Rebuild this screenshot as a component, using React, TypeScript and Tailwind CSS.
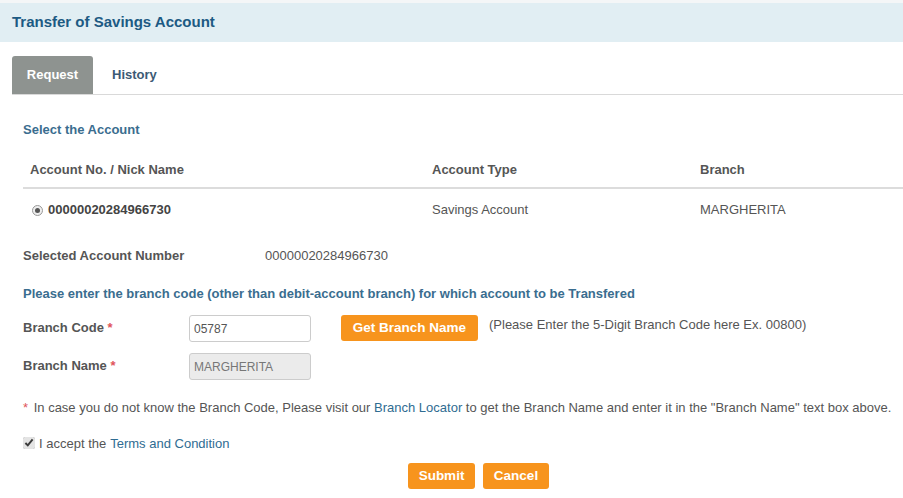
import { useState } from "react";

const font = "font-[family-name:'Liberation_Sans',Arial,sans-serif]";

function OrangeButton({ label, className }: { label: string; className?: string }) {
  return (
    <button
      type="button"
      className={`h-[26px] rounded-[3px] bg-[#f7941d] text-[13.5px] font-bold text-white ${className ?? ""}`}
    >
      {label}
    </button>
  );
}

export default function App() {
  const [accepted, setAccepted] = useState(true);
  const [branchCode, setBranchCode] = useState("05787");

  return (
    <div className={`${font} h-[498px] w-[903px] overflow-hidden bg-white text-[13px] text-[#555]`}>
      <div className="h-[3px] bg-[#f4f6f7]" />
      <div className="flex h-[39px] items-center bg-[#e1eef3] pl-3">
        <h1 className="text-[15px] font-bold text-[#1c5a83]">Transfer of Savings Account</h1>
      </div>

      <div className="mt-[14px] ml-3 flex h-[39px] items-stretch border-b border-[#d9d9d9]">
        <div className="flex w-[81px] items-center justify-center rounded-t-[3px] bg-[#8e9390] font-bold text-white">
          Request
        </div>
        <div className="flex items-center pl-[19px] font-bold text-[#3c5a75]">History</div>
      </div>

      <div className="pl-[23px]">
        <p className="mt-[25px] h-[16px] font-bold text-[#3a6d8f]">Select the Account</p>

        <div className="mt-[24px] flex h-[29px] items-start border-b-2 border-[#dcdcdc] font-bold text-[#555]">
          <span className="w-[409px] pl-[7px]">Account No. / Nick Name</span>
          <span className="w-[268px]">Account Type</span>
          <span>Branch</span>
        </div>

        <div className="flex h-[42px] items-center">
          <span className="flex w-[409px] items-center pl-[9px]">
            <span className="mr-[5px] flex h-[11px] w-[11px] items-center justify-center rounded-full border border-[#999] bg-[#eee]">
              <span className="h-[5px] w-[5px] rounded-full bg-[#555]" />
            </span>
            <span className="font-bold text-[#444]">00000020284966730</span>
          </span>
          <span className="w-[268px]">Savings Account</span>
          <span>MARGHERITA</span>
        </div>

        <div className="mt-[15px] flex">
          <span className="w-[242px] font-bold">Selected Account Number</span>
          <span>00000020284966730</span>
        </div>

        <p className="mt-[18px] font-bold text-[#3a6d8f]">
          Please enter the branch code (other than debit-account branch) for which account to be Transfered
        </p>

        <div className="mt-[12px] flex items-start">
          <span className="w-[166px] pt-[3px] font-bold">
            Branch Code <span className="text-[#e0545a]">*</span>
          </span>
          <input
            value={branchCode}
            onChange={(e) => setBranchCode(e.target.value)}
            className="h-[27px] w-[122px] rounded-[3px] border border-[#ccc] px-[4px] text-[12px] text-[#555] outline-none"
          />
          <OrangeButton label="Get Branch Name" className="ml-[30px] w-[137px]" />
          <span className="ml-[11px]">(Please Enter the 5-Digit Branch Code here Ex. 00800)</span>
        </div>

        <div className="mt-[11px] flex items-start">
          <span className="w-[166px] pt-[3px] font-bold">
            Branch Name <span className="text-[#e0545a]">*</span>
          </span>
          <input
            value="MARGHERITA"
            readOnly
            className="h-[27px] w-[122px] rounded-[3px] border border-[#ccc] bg-[#ebebeb] px-[4px] text-[12px] text-[#777] outline-none"
          />
        </div>

        <p className="mt-[18px] whitespace-nowrap">
          <span className="mr-[2px] text-[#e0545a]">*</span> In case you do not know the Branch Code, Please visit our{" "}
          <span className="text-[#2f6c92]">Branch Locator</span> to get the Branch Name and enter it in the "Branch
          Name" text box above.
        </p>

        <label className="mt-[16px] flex items-center">
          <input
            type="checkbox"
            checked={accepted}
            onChange={(e) => setAccepted(e.target.checked)}
            className="m-0 mr-[4px] h-[12px] w-[12px] accent-[#e4e4e4]"
          />
          I accept the <span className="ml-1 text-[#2f6c92]">Terms and Condition</span>
        </label>

        <div className="mt-[10px] ml-[385px] flex gap-[8px]">
          <OrangeButton label="Submit" className="w-[67px]" />
          <OrangeButton label="Cancel" className="w-[66px]" />
        </div>
      </div>
    </div>
  );
}
